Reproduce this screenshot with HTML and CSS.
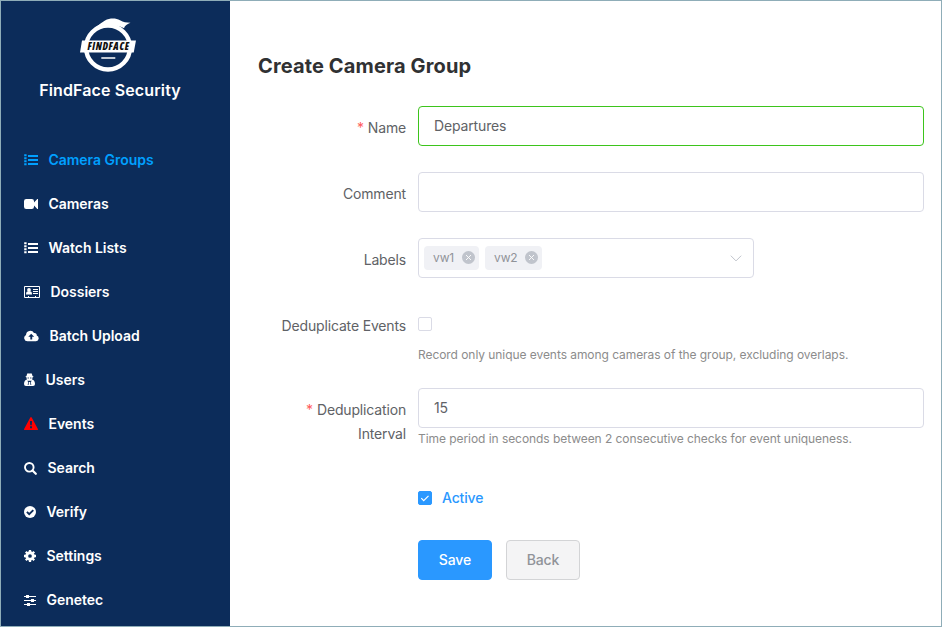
FILE: index.html
```html
<!DOCTYPE html>
<html lang="en">
<head>
<meta charset="utf-8">
<title>FindFace Security</title>
<link rel="stylesheet" href="styles.css">
</head>
<body>
<div class="app">
  <aside class="sidebar">
    <div class="brand">
      <svg class="logo" width="58" height="56" viewBox="0 0 58 56">
        <circle cx="29" cy="30.500" r="22" fill="none" stroke="#fff" stroke-width="4.400"/>
        <path d="M9 20C14 12 20 7 26 3.500 31 .8 37 1 41 3.300c3.500 1.900 6 2.300 10.500 2.500-3 1.200-6 3-6.500 5.500C36 6 20 7 9 20Z" fill="#fff"/>
        <path d="M3 23.500h54l-2.300 12H1Z" fill="#fff"/>
        <path d="M22.300 41h14" stroke="#fff" stroke-width="1.500"/>
        <text class="logo-text" x="8.500" y="33" textLength="41.500">FINDFACE</text>
      </svg>
      <div class="brand-name">FindFace Security</div>
    </div>
    <nav class="menu">
      <a class="item active"><svg width="14" height="12" viewBox="0 0 14 12"><path d="M.2.300h2.400v2H.2zM.2 3.300h2.400v2H.2zM.2 6.300h2.400v2H.2zM.2 9.300h2.400v2H.2zM4 1h10v2H4zM4 5h10v2H4zM4 9h10v2H4z"/></svg><span>Camera Groups</span></a>
      <a class="item"><svg width="14" height="12" viewBox="0 0 14 12"><path d="M2.200 1h5.600Q10 1 10 3.200v1.300L13.300 1H14v10h-.7L10 7.500v1.300Q10 11 7.800 11H2.200Q0 11 0 8.800V3.200Q0 1 2.200 1Z"/></svg><span>Cameras</span></a>
      <a class="item"><svg width="14" height="12" viewBox="0 0 14 12"><path d="M.2.300h2.400v2H.2zM.2 3.300h2.400v2H.2zM.2 6.300h2.400v2H.2zM.2 9.300h2.400v2H.2zM4 1h10v2H4zM4 5h10v2H4zM4 9h10v2H4z"/></svg><span>Watch Lists</span></a>
      <a class="item"><svg width="16" height="12" viewBox="0 0 16 12"><path fill-rule="evenodd" d="M1 0h14q1 0 1 1v10q0 1-1 1H1q-1 0-1-1V1q0-1 1-1ZM1 1v10h3v-1h1v1h6v-1h1v1h3V1ZM9 3h5v1H9zM9 5h5v1H9zM9 7h5v1H9z"/><circle cx="5" cy="4" r="1.900"/><path d="M2 8.500Q2 5.500 3.500 5.500h3Q8 5.500 8 8.500Z"/></svg><span>Dossiers</span></a>
      <a class="item"><svg width="15" height="12" viewBox="0 0 15 12"><path fill-rule="evenodd" d="M3.500 11.300A3.400 3.400 0 0 1 2 4.900 4.300 4.300 0 0 1 10 3 2.200 2.200 0 0 1 12.700 5.500 3 3 0 0 1 12 11.300ZM7.200 3.800 4.300 6.800H6.300V9.400H8.200V6.800h2Z"/></svg><span>Batch Upload</span></a>
      <a class="item"><svg width="11" height="14" viewBox="0 0 11 14"><path fill-rule="evenodd" d="M3 1.200Q3.500 0 4.500.5h2Q7.500 0 8 1.200L8.500 3l1.200.7-1.300.8Q8.500 6 8 6.400 11 7.200 11 11q0 2-2 2H2q-2 0-2-2 0-3.800 3-4.600Q2.500 6 2.600 4.500L1.300 3.700l1.200-.7ZM3.600 4.600v.8h1.200v-.8ZM6.200 4.600v.8h1.200v-.8ZM3.200 7.700l1 1.300-.5 3h.8l.4-3h1.200l.4 3h.8l-.5-3 1-1.300Z"/></svg><span>Users</span></a>
      <a class="item"><svg class="alert" width="14" height="14" viewBox="0 0 14 14"><path fill-rule="evenodd" d="M6.300.5q.7-1 1.400 0L13.900 12q.3 1-.7 1H.8q-1 0-.7-1ZM5.900 4l.3 4.300h1.600L8.100 4ZM6 9.300v1.900h2V9.300Z"/></svg><span>Events</span></a>
      <a class="item"><svg width="13" height="14" viewBox="0 -1 13 14"><circle cx="5.300" cy="5.300" r="4.300" fill="none" stroke="currentColor" stroke-width="1.900"/><path d="m8.500 8.500 3.300 3.300" stroke="currentColor" stroke-width="2.200" stroke-linecap="round"/></svg><span>Search</span></a>
      <a class="item"><svg width="12" height="12" viewBox="0 0 12 12"><circle cx="6" cy="6" r="6"/><path class="tick" d="M2.900 5.900 5.200 8.200 9.300 4.100"/></svg><span>Verify</span></a>
      <a class="item"><svg width="12" height="12" viewBox="0 0 12 12"><circle cx="6" cy="6" r="3.300" fill="none" stroke="currentColor" stroke-width="2.900"/><path d="M6 0v2M6 10v2M0 6h2M10 6h2M1.800 1.800l1.500 1.500M8.700 8.700l1.500 1.500M1.800 10.200l1.500-1.500M8.700 3.300l1.500-1.500" stroke="currentColor" stroke-width="2.300"/></svg><span>Settings</span></a>
      <a class="item"><svg width="12" height="12" viewBox="0 0 12 12"><path d="M0 2h12v1H0zM0 6h12v1H0zM0 10h12v1H0zM2 1h3v3H2zM7 5h3v3H7zM3 9h3v3H3z"/></svg><span>Genetec</span></a>
    </nav>
  </aside>
  <main class="content">
    <h1>Create Camera Group</h1>
    <form class="form">
      <div class="row">
        <label class="label required">Name</label>
        <div class="field"><div class="input valid">Departures</div></div>
      </div>
      <div class="row">
        <label class="label">Comment</label>
        <div class="field"><div class="input"></div></div>
      </div>
      <div class="row">
        <label class="label">Labels</label>
        <div class="field">
          <div class="select">
            <span class="tag">vw1<svg width="13" height="13" viewBox="0 0 13 13"><circle cx="6.500" cy="6.500" r="6.500"/><path d="m4 4 5 5M9 4 4 9"/></svg></span>
            <span class="tag second">vw2<svg width="13" height="13" viewBox="0 0 13 13"><circle cx="6.500" cy="6.500" r="6.500"/><path d="m4 4 5 5M9 4 4 9"/></svg></span>
            <svg class="arrow" width="12" height="7" viewBox="0 0 12 7"><path d="m.8.700 5.200 5.200L11.200.7"/></svg>
          </div>
        </div>
      </div>
      <div class="row dedupe">
        <label class="label">Deduplicate Events</label>
        <div class="field">
          <div class="check-line"><span class="checkbox"></span></div>
          <div class="hint">Record only unique events among cameras of the group, excluding overlaps.</div>
        </div>
      </div>
      <div class="row interval">
        <label class="label required">Deduplication Interval</label>
        <div class="field">
          <div class="input">15</div>
          <div class="hint">Time period in seconds between 2 consecutive checks for event uniqueness.</div>
        </div>
      </div>
      <div class="row state">
        <div class="label"></div>
        <div class="field check-line">
          <span class="checkbox checked"><svg width="12" height="12" viewBox="0 0 12 12"><path d="m2.300 6.200 2.400 2.400 4.800-4.800"/></svg></span>
          <span class="check-label">Active</span>
        </div>
      </div>
      <div class="row actions">
        <div class="label"></div>
        <div class="field buttons">
          <button type="button" class="btn primary">Save</button>
          <button type="button" class="btn">Back</button>
        </div>
      </div>
    </form>
  </main>
</div>
</body>
</html>
```
FILE: styles.css
```css
* { box-sizing: border-box; }
body { margin: 0; font-family: Inter, "Liberation Sans", sans-serif; font-size: 14px; color: #606266; }
.app { display: flex; width: 942px; height: 627px; border: 1px solid #8fadb8; background: #fff; overflow: hidden; }
.sidebar { width: 229px; flex: none; background: #0c2c5a; color: #fff; }
.brand { height: 137px; padding-top: 16px; display: flex; flex-direction: column; align-items: center; }
.logo { display: block; margin-right: 15px; }
.logo-text { font: italic 800 10px "Open Sans", sans-serif; font-stretch: 75%; fill: #111; }
.brand-name { margin: 7px 11px 0 0; font-size: 16px; line-height: 20px; font-weight: 600; letter-spacing: .12px; }
.item { display: flex; align-items: center; height: 44px; padding-left: 23px; font-weight: 600; letter-spacing: -.03px; }
.item span { padding-bottom: 2px; }
.item svg { flex: none; margin-right: 10.500px; fill: currentColor; }
.item.active { color: #00a0ff; }
.item .alert { color: #f00; }
.item .tick { fill: none; stroke: #0c2c5a; stroke-width: 1.900; }
.content { flex: 1; padding: 51px 17px 0 28px; }
h1 { margin: 0; font-size: 20px; line-height: 28px; font-weight: 700; letter-spacing: .13px; color: #303133; }
.form { margin-top: 26px; }
.row { display: flex; gap: 12px; margin-bottom: 26px; }
.label { width: 148px; flex: none; text-align: right; line-height: 24px; padding-top: 10px; letter-spacing: -.16px; }
.required::before { content: "*"; color: #ff5c5c; margin-right: 4px; }
.field { flex: 1; }
.input { height: 40px; padding: 0 15px; border: 1px solid #dadbe6; border-radius: 4px; line-height: 38px; letter-spacing: -.15px; }
.input.valid { border-color: #3dc41c; }
.select { display: flex; align-items: center; width: 336px; height: 40px; padding: 0 11px 0 5px; border: 1px solid #dadbe6; border-radius: 4px; }
.tag { display: flex; align-items: center; justify-content: space-between; width: 55px; height: 24px; margin-right: 6px; padding: 0 4px 1px 9px; border-radius: 4px; background: #f0f1f5; color: #909399; font-size: 12px; letter-spacing: -.1px; }
.tag.second { width: 57px; }
.tag circle { fill: #c0c4cc; }
.tag path { fill: none; stroke: #fff; stroke-width: .9; }
.arrow { margin-left: auto; fill: none; stroke: #c0c4cc; }
.check-line { display: flex; align-items: center; height: 40px; }
.checkbox { display: block; width: 14px; height: 14px; border: 1px solid #dadbe6; border-radius: 2px; }
.checkbox.checked { border-color: #2a98ff; background: #2a98ff; }
.checkbox svg { display: block; fill: none; stroke: #fff; stroke-width: 1.200; }
.check-label { margin-left: 10px; padding-bottom: 2px; color: #2a98ff; font-weight: 500; letter-spacing: -.15px; }
.hint { font-size: 12px; line-height: 20px; color: #8c8c8c; white-space: nowrap; letter-spacing: -.06px; }
.dedupe { height: 84px; margin: 0; }
.dedupe .hint { margin-top: 1px; }
.interval { height: 90px; margin: 0; }
.interval .hint { margin-top: 1px; }
.state { margin-bottom: 22px; }
.buttons { display: flex; gap: 14px; }
.btn { width: 74px; height: 40px; padding: 0 0 2px; border: 1px solid #d3d4d6; border-radius: 4px; background: #f4f4f5; color: #909399; font: 500 14px Inter, sans-serif; letter-spacing: -.1px; }
.btn.primary { border-color: #2a98ff; background: #2a98ff; color: #fff; }
```
